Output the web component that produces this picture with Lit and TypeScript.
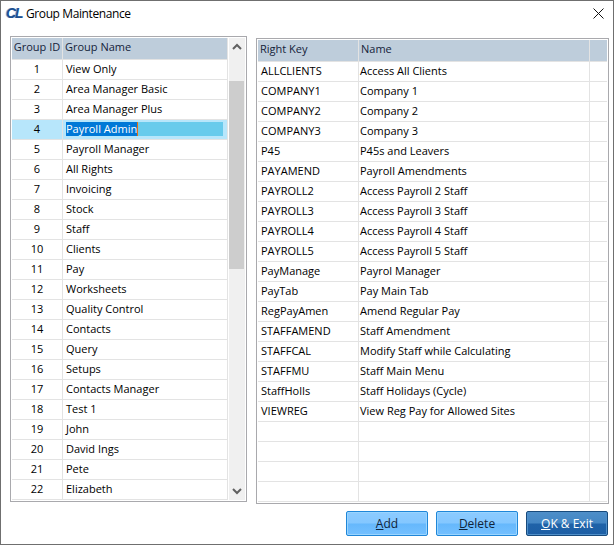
import { LitElement, html, css } from 'lit';
import { customElement } from 'lit/decorators.js';

const GROUPS = [
  'View Only', 'Area Manager Basic', 'Area Manager Plus', 'Payroll Admin', 'Payroll Manager',
  'All Rights', 'Invoicing', 'Stock', 'Staff', 'Clients', 'Pay', 'Worksheets', 'Quality Control',
  'Contacts', 'Query', 'Setups', 'Contacts Manager', 'Test 1', 'John', 'David Ings', 'Pete', 'Elizabeth',
];

const RIGHTS: [string, string][] = [
  ['ALLCLIENTS', 'Access All Clients'],
  ['COMPANY1', 'Company 1'],
  ['COMPANY2', 'Company 2'],
  ['COMPANY3', 'Company 3'],
  ['P45', 'P45s and Leavers'],
  ['PAYAMEND', 'Payroll Amendments'],
  ['PAYROLL2', 'Access Payroll 2 Staff'],
  ['PAYROLL3', 'Access Payroll 3 Staff'],
  ['PAYROLL4', 'Access Payroll 4 Staff'],
  ['PAYROLL5', 'Access Payroll 5 Staff'],
  ['PayManage', 'Payrol Manager'],
  ['PayTab', 'Pay Main Tab'],
  ['RegPayAmen', 'Amend Regular Pay'],
  ['STAFFAMEND', 'Staff Amendment'],
  ['STAFFCAL', 'Modify Staff while Calculating'],
  ['STAFFMU', 'Staff Main Menu'],
  ['StaffHolIs', 'Staff Holidays (Cycle)'],
  ['VIEWREG', 'View Reg Pay for Allowed Sites'],
  ['', ''],
  ['', ''],
  ['', ''],
  ['', ''],
];

@customElement('app-root')
export class AppRoot extends LitElement {
  static styles = css`
    :host {
      display: block;
      width: 614px;
      height: 545px;
      font-family: 'Open Sans', 'Noto Sans', sans-serif;
      font-size: 11px;
      color: #000;
    }
    .window {
      box-sizing: border-box;
      width: 614px;
      height: 545px;
      border: 1px solid #6f6f6f;
      background: #fff;
      display: flex;
      flex-direction: column;
      padding: 0 4px 8px 9px;
    }
    .title {
      height: 24px;
      display: flex;
      align-items: center;
      margin-left: -4px;
      font-size: 12px;
      letter-spacing: -0.4px;
      flex: none;
    }
    .logo {
      width: 18px;
      margin-right: 2px;
      flex: none;
      color: #1d4f91;
      font: italic bold 14px 'Liberation Sans', sans-serif;
      letter-spacing: -1px;
      text-shadow: -1px 0 0 #8fb6dc;
    }
    .close {
      margin-left: auto;
      margin-right: 5px;
      display: block;
    }
    .panels {
      display: flex;
      align-items: flex-start;
      gap: 9px;
      flex: none;
      margin-top: 11px;
    }
    .box {
      box-sizing: border-box;
      border: 1px solid #a9a9ad;
      padding: 1px;
      display: flex;
      overflow: hidden;
      height: 466px;
    }
    .left { width: 237px; }
    .right { width: 353px; margin-top: 2px; }
    .grid { display: flex; flex-direction: column; overflow: hidden; }
    .left .grid { width: 216px; }
    .right .grid { width: 349px; }
    .row {
      display: flex;
      height: 20px;
      flex: none;
      box-sizing: border-box;
      border-bottom: 1px solid #e3e3e3;
    }
    .row.head {
      height: 22px;
      background: #becddb;
      color: #14233a;
    }
    .cell {
      box-sizing: border-box;
      flex: none;
      border-right: 1px solid #e3e3e3;
      line-height: 18px;
      white-space: nowrap;
      overflow: hidden;
    }
    .head .cell { padding-left: 2px; }
    .left .c1 { width: 51px; text-align: center; }
    .left .c2 { width: 165px; padding-left: 3px; }
    .right .c1 { width: 101px; padding-left: 3px; }
    .right .c2 { width: 231px; padding-left: 1px; }
    .right .c3 { width: 17px; border-right: none; }
    .head .c1, .head .c2 { padding-left: 2px !important; }
    .left .head .c1 { padding-left: 0 !important; }
    .row.sel { background: #b7e6fb; }
    .edit {
      display: block;
      height: 14px;
      margin: 2px 4px 0 0;
      background: #68cbec;
      line-height: 14px;
    }
    .edit span {
      display: inline-block;
      background: #0078d7;
      color: #fff;
      border-right: 1px solid #e8700c;
    }
    .bar {
      width: 16px;
      margin-left: 1px;
      background: #f0f0f0;
      display: flex;
      flex-direction: column;
      align-items: center;
      flex: none;
      height: 462px;
    }
    .arrow {
      height: 18px;
      flex: none;
      display: flex;
      align-items: center;
      justify-content: center;
    }
    .track { flex: 1; width: 100%; }
    .thumb { width: 15px; height: 188px; margin-top: 25px; background: #cdcdcd; }
    .buttons {
      display: flex;
      justify-content: flex-end;
      gap: 8px;
      margin-top: auto;
      margin-right: 1px;
    }
    button {
      box-sizing: border-box;
      width: 82px;
      height: 25px;
      padding: 0;
      border: 1px solid #1f86d8;
      border-radius: 2px;
      font: inherit;
      font-size: 12px;
      color: #10243a;
      background: linear-gradient(#8ccbff 0%, #84c7ff 48%, #66b8fc 52%, #74c0ff 100%);
      box-shadow: inset 0 0 0 1px #9ad5ff;
    }
    button.primary {
      border-color: #174a7c;
      color: #fff;
      background: linear-gradient(#4d8ec9 0%, #4486c3 48%, #1f62a8 52%, #1d5fa5 100%);
      box-shadow: inset 0 0 0 1px #4f8fc9;
    }
    u { text-underline-offset: 1px; }
  `;

  chevron(up: boolean) {
    const d = up ? 'M1 6 L5 2 L9 6' : 'M1 2 L5 6 L9 2';
    return html`<svg width="10" height="8" viewBox="0 0 10 8">
      <path d=${d} fill="none" stroke="#606060" stroke-width="2" />
    </svg>`;
  }

  render() {
    return html`
      <div class="window">
        <div class="title">
          <span class="logo">CL</span>
          <span>Group Maintenance</span>
          <svg class="close" width="11" height="11" viewBox="0 0 11 11">
            <path d="M0.5 0.5 L10.5 10.5 M10.5 0.5 L0.5 10.5" stroke="#111" stroke-width="1" fill="none" />
          </svg>
        </div>
        <div class="panels">
          <div class="box left">
            <div class="grid">
              <div class="row head">
                <div class="cell c1">Group ID</div>
                <div class="cell c2">Group Name</div>
              </div>
              ${GROUPS.map((name, i) => html`
                <div class="row ${i === 3 ? 'sel' : ''}">
                  <div class="cell c1">${i + 1}</div>
                  <div class="cell c2">
                    ${i === 3 ? html`<div class="edit"><span>${name}</span></div>` : name}
                  </div>
                </div>
              `)}
            </div>
            <div class="bar">
              <div class="arrow">${this.chevron(true)}</div>
              <div class="track"><div class="thumb"></div></div>
              <div class="arrow">${this.chevron(false)}</div>
            </div>
          </div>
          <div class="box right">
            <div class="grid">
              <div class="row head">
                <div class="cell c1">Right Key</div>
                <div class="cell c2">Name</div>
                <div class="cell c3"></div>
              </div>
              ${RIGHTS.map(([key, name]) => html`
                <div class="row">
                  <div class="cell c1">${key}</div>
                  <div class="cell c2">${name}</div>
                  <div class="cell c3"></div>
                </div>
              `)}
            </div>
          </div>
        </div>
        <div class="buttons">
          <button><u>A</u>dd</button>
          <button><u>D</u>elete</button>
          <button class="primary"><u>O</u>K &amp; Exit</button>
        </div>
      </div>
    `;
  }
}
